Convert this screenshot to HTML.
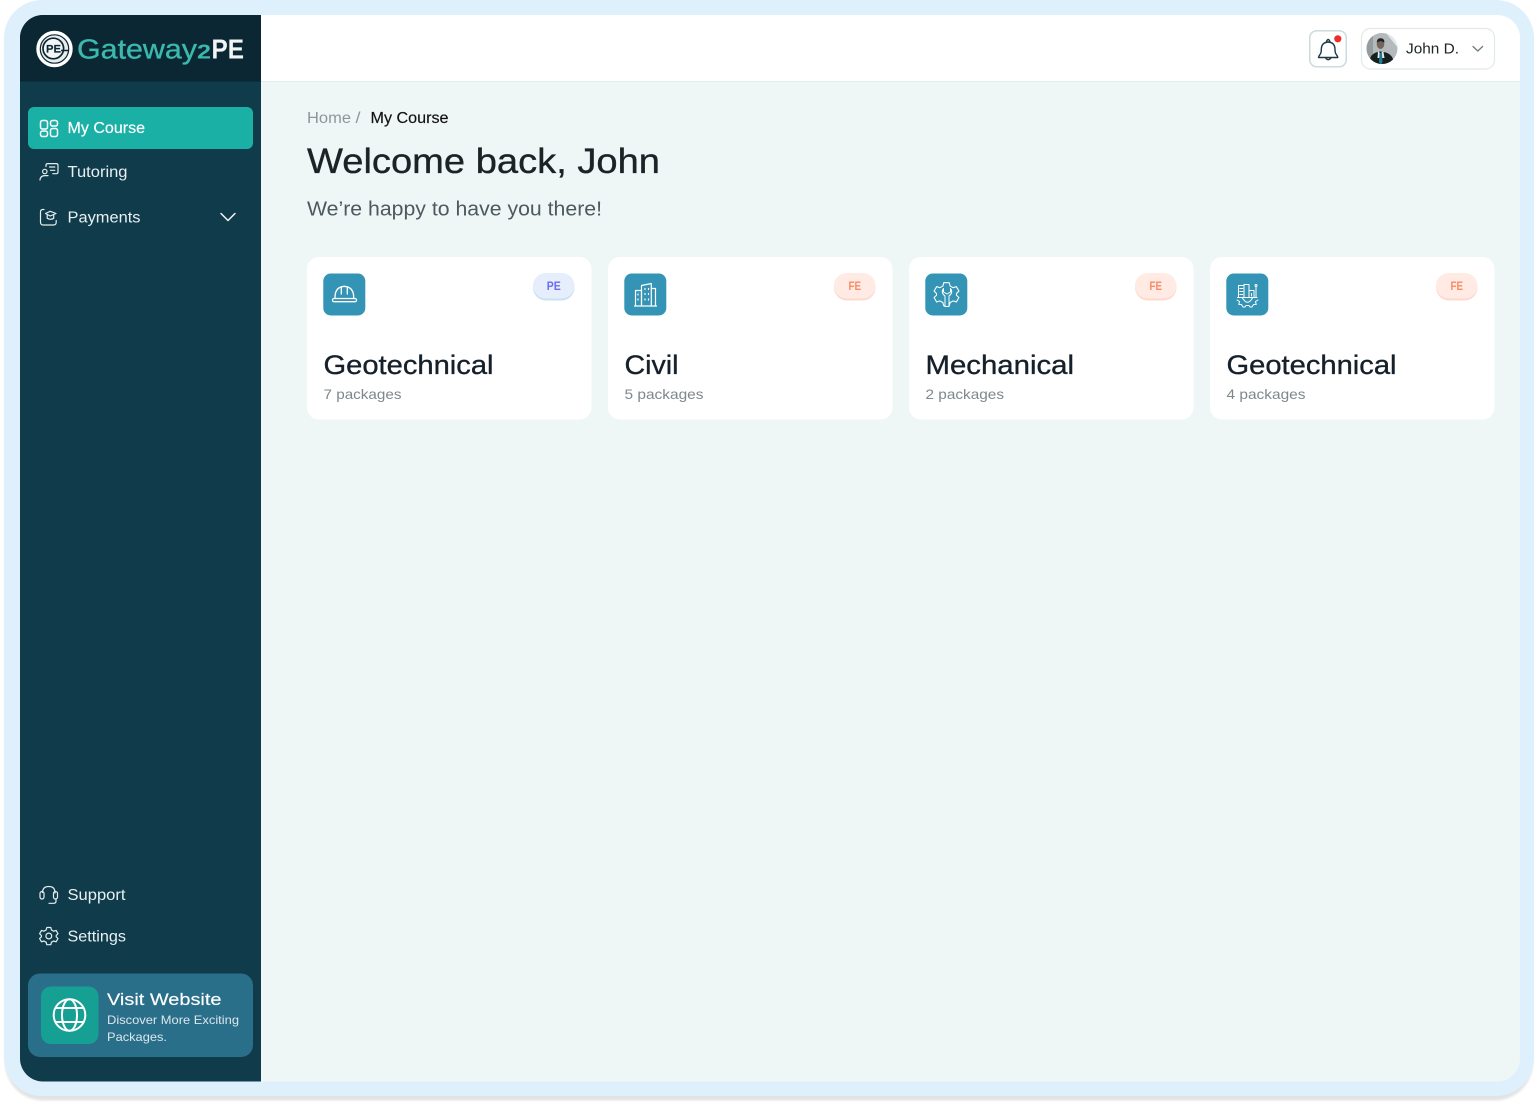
<!DOCTYPE html>
<html lang="en">
<head>
<meta charset="utf-8">
<title>Gateway2PE - My Course</title>
<style>
html,body{margin:0;padding:0;background:#fff;width:1539px;height:1107px;overflow:hidden}
svg{display:block}
text{font-family:"Liberation Sans",sans-serif;white-space:pre}
.m{stroke-width:.35px;paint-order:stroke}
.s{stroke-width:.15px;paint-order:stroke}
.ic{fill:none;stroke-linecap:round;stroke-linejoin:round}
</style>
</head>
<body>
<svg width="1539" height="1107" viewBox="0 0 1539 1107" xmlns="http://www.w3.org/2000/svg">
<defs>
<clipPath id="inner"><rect x="20" y="15" width="1500" height="1066.500" rx="23"/></clipPath>
<clipPath id="av"><circle cx="1382" cy="48.500" r="15.500"/></clipPath>
<filter id="bl" x="-5%" y="-5%" width="110%" height="110%"><feGaussianBlur stdDeviation="1"/></filter>
</defs>

<!-- outer frame -->
<rect x="5" y="4" width="1528" height="1096.500" rx="38" fill="#dcdddd" opacity=".8" filter="url(#bl)"/>
<rect x="4" y="0" width="1530" height="1096" rx="38" fill="#dff0fd"/>

<g clip-path="url(#inner)">
  <rect x="20" y="15" width="1500" height="1067" fill="#eff7f6"/>
  <rect x="261" y="15" width="1259" height="66" fill="#fff"/>
  <rect x="261" y="81" width="1259" height="1" fill="#e3ecec"/>
  <rect x="20" y="15" width="241" height="1067" fill="#103b4b"/>
  <rect x="20" y="15" width="241" height="66.500" fill="#0b2733"/>
</g>

<!-- logo -->
<circle cx="54.500" cy="49" r="16.500" fill="none" stroke="#fff" stroke-width="3.400"/>
<circle cx="54.500" cy="49" r="13.600" fill="#e9eced"/>
<circle cx="53.300" cy="48.500" r="10.300" fill="#f4f5f5" stroke="#0b2733" stroke-width="1.700"/>
<path d="M61 50.500H68.300" stroke="#0b2733" stroke-width="1.500" fill="none"/>
<text x="46" y="52.700" font-size="11" font-weight="700" fill="#0b2733" stroke="#0b2733" class="s" textLength="15" lengthAdjust="spacingAndGlyphs">PE</text>
<text x="77" y="58.500" font-size="28" fill="#3cb9ae" stroke="#3cb9ae" class="m" textLength="120" lengthAdjust="spacingAndGlyphs">Gateway</text>
<text x="197" y="58.500" font-size="20" font-weight="700" fill="#3cb9ae" textLength="14" lengthAdjust="spacingAndGlyphs">2</text>
<text x="211.500" y="58.500" font-size="28" font-weight="700" fill="#f2f4f5" textLength="32.500" lengthAdjust="spacingAndGlyphs">PE</text>

<!-- active nav -->
<rect x="28" y="107" width="225" height="42" rx="6" fill="#1ab0a6"/>
<g class="ic" stroke="#fff" stroke-width="1.500" >
  <rect x="40.500" y="120.500" width="7" height="8.500" rx="2"/>
  <rect x="50.500" y="120.500" width="7" height="5.500" rx="2"/>
  <rect x="40.500" y="131" width="7" height="5.500" rx="2"/>
  <rect x="50.500" y="128.500" width="7" height="8" rx="2"/>
</g>
<text x="67.500" y="133" font-size="15.500" fill="#fff" stroke="#fff" class="s" textLength="77.500" lengthAdjust="spacingAndGlyphs">My Course</text>

<!-- tutoring icon -->
<g class="ic" stroke="#e4eef0" stroke-width="1.200">
  <path d="M46 166.500V165.300Q46 163.600 47.800 163.600H56.200Q58 163.600 58 165.300V172Q58 173.700 56.200 173.700H52.800"/>
  <path d="M49.500 167H54.800M50.500 170.300H54.800"/>
  <circle cx="44.800" cy="171.500" r="2.200"/>
  <path d="M40 180Q40.300 175.600 45 175.600H48"/>
</g>
<text x="67.500" y="177" font-size="15.500" fill="#e8f0f2" textLength="60" lengthAdjust="spacingAndGlyphs">Tutoring</text>

<!-- payments icon -->
<g class="ic" stroke="#e4eef0" stroke-width="1.200">
  <path d="M44 209.500H42.800Q40.500 209.500 40.500 212V222.300Q40.500 225 43.200 225H53.600Q56.200 225 56.200 222.300V220.500"/>
  <path d="M45.500 213.500L50.200 211.300L56 213.500L50.200 216L45.500 213.500Z"/>
  <path d="M47.200 215.200V218.300Q50.400 220.300 53.700 218.300V215"/>
</g>
<text x="67.500" y="222.500" font-size="15.500" fill="#e8f0f2" textLength="73" lengthAdjust="spacingAndGlyphs">Payments</text>
<path d="M221 213.500L228 220.500L235 213.500" fill="none" stroke="#f0f5f6" stroke-width="1.500" stroke-linecap="round" stroke-linejoin="round"/>

<!-- support -->
<g class="ic" stroke="#e4eef0" stroke-width="1.200">
  <path d="M42.500 892V892.500Q42.500 886.500 48.800 886.500Q55 886.500 55 892.500V893"/>
  <rect x="40" y="891.500" width="4" height="7.500" rx="2"/>
  <rect x="53.500" y="891.500" width="4" height="7.500" rx="2"/>
  <path d="M56 899V901.200Q56 903.300 53.500 903.300H49"/>
</g>
<text x="67.500" y="900" font-size="15.500" fill="#e8f0f2" textLength="58" lengthAdjust="spacingAndGlyphs">Support</text>

<!-- settings -->
<g class="ic" stroke="#e4eef0" stroke-width="1.200">
  <circle cx="48.800" cy="936" r="2.900"/>
  <path d="M46.800 927.500H50.800L51.500 930L53.700 931.200L56.100 930.400L58 933.700L56.200 935.500V936.800L58 938.500L56.100 941.800L53.700 941L51.500 942.200L50.800 944.700H46.800L46.100 942.200L43.900 941L41.500 941.800L39.600 938.500L41.400 936.800V935.500L39.600 933.700L41.500 930.400L43.900 931.200L46.100 930Z"/>
</g>
<text x="67.500" y="941.500" font-size="15.500" fill="#e8f0f2" textLength="58.500" lengthAdjust="spacingAndGlyphs">Settings</text>

<!-- visit website -->
<rect x="28" y="973.500" width="225" height="83.500" rx="12" fill="#2a6f8a"/>
<rect x="41" y="986.500" width="57.500" height="57.500" rx="10" fill="#16a093"/>
<g class="ic" stroke="#fff" stroke-width="2">
  <circle cx="69.500" cy="1015" r="15.800"/>
  <ellipse cx="69.500" cy="1015" rx="7.500" ry="15.800"/>
  <path d="M55.500 1008H83.500M55.500 1022H83.500"/>
</g>
<text x="107" y="1005" font-size="17" fill="#fff" stroke="#fff" class="s" textLength="114.500" lengthAdjust="spacingAndGlyphs">Visit Website</text>
<text x="107" y="1024" font-size="12" fill="#dbe7ec" textLength="132" lengthAdjust="spacingAndGlyphs">Discover More Exciting</text>
<text x="107" y="1041" font-size="12" fill="#dbe7ec" textLength="60" lengthAdjust="spacingAndGlyphs">Packages.</text>

<!-- topbar -->
<rect x="1309.750" y="30.750" width="36.500" height="36" rx="7" fill="#fff" stroke="#cfdadd" stroke-width="1.500"/>
<g class="ic" stroke="#1b3a46" stroke-width="1.400">
  <path d="M1318.500 57.500H1337.800Q1337.800 56.500 1336.500 54.800Q1335 53 1335 49.500Q1335 42.500 1328.200 42Q1321.300 42.500 1321.300 49.500Q1321.300 53 1319.800 54.800Q1318.500 56.500 1318.500 57.500Z"/>
  <path d="M1326.500 41.500Q1328.200 37.500 1329.900 41.500"/>
  <path d="M1325.500 57.800Q1328.200 61.500 1331 57.800"/>
</g>
<circle cx="1337.800" cy="38.800" r="3.600" fill="#ee2a2a"/>

<rect x="1361.500" y="28.500" width="133" height="40.500" rx="9" fill="#fff" stroke="#e1e9ec" stroke-width="1.200"/>
<g clip-path="url(#av)">
  <rect x="1366" y="33" width="32" height="32" fill="#b4babb"/>
  <path d="M1386 33L1398 48V33Z" fill="#e3e9ea"/>
  <rect x="1366" y="33" width="7" height="32" fill="#959c9d"/>
  <ellipse cx="1380.500" cy="44" rx="3.800" ry="5" fill="#75645a"/>
  <path d="M1376.700 42.500Q1377 38 1380.500 38.200Q1384.500 38 1384.500 42.500L1380.500 41Z" fill="#1e2122"/>
  <path d="M1369 65Q1369 54 1377.500 52L1380.500 51.500L1384 52Q1394 54 1394 65Z" fill="#17201f"/>
  <path d="M1378 51L1380.500 53.500L1383.300 51L1384.500 58H1377.500Z" fill="#e7ecec"/>
  <path d="M1379.500 53H1382L1382.500 62L1380.700 65L1379 62Z" fill="#1e7f93"/>
</g>
<text x="1406" y="53.500" font-size="15" fill="#1e2427" textLength="53" lengthAdjust="spacingAndGlyphs">John D.</text>
<path d="M1473 46.500L1477.800 51L1482.600 46.500" fill="none" stroke="#6d7a80" stroke-width="1.300" stroke-linecap="round" stroke-linejoin="round"/>

<!-- heading -->
<text x="307" y="123" font-size="15.500" fill="#8d979b" textLength="44" lengthAdjust="spacingAndGlyphs">Home</text>
<text x="355.500" y="123" font-size="16" fill="#8d979b" textLength="5" lengthAdjust="spacingAndGlyphs">/</text>
<text x="370.500" y="123" font-size="15.500" fill="#111" stroke="#111" class="s" textLength="78" lengthAdjust="spacingAndGlyphs">My Course</text>
<text x="307" y="173" font-size="35" fill="#1b2327" stroke="#1b2327" class="m" textLength="353" lengthAdjust="spacingAndGlyphs">Welcome back, John</text>
<text x="307" y="215.500" font-size="20" fill="#4d595e" textLength="295" lengthAdjust="spacingAndGlyphs">We’re happy to have you there!</text>

<!-- cards -->
<rect x="307" y="257" width="284.500" height="162.500" rx="12" fill="#fff"/>
<rect x="608" y="257" width="284.500" height="162.500" rx="12" fill="#fff"/>
<rect x="909" y="257" width="284.500" height="162.500" rx="12" fill="#fff"/>
<rect x="1210" y="257" width="284.500" height="162.500" rx="12" fill="#fff"/>

<!-- card icons bg -->
<rect x="323.300" y="273.500" width="42" height="42" rx="7.500" fill="#3394b5"/>
<rect x="624.300" y="273.500" width="42" height="42" rx="7.500" fill="#3394b5"/>
<rect x="925.300" y="273.500" width="42" height="42" rx="7.500" fill="#3394b5"/>
<rect x="1226.300" y="273.500" width="42" height="42" rx="7.500" fill="#3394b5"/>

<!-- helmet -->
<g class="ic" stroke="#fff" stroke-width="1.300">
  <path d="M335 298.500Q334.500 287 344.300 286.300Q354.200 287 353.700 298.500"/>
  <path d="M341.300 294V286.800M347.300 294V286.800"/>
  <rect x="332.500" y="298.500" width="24" height="3.200" rx="1.500"/>
</g>
<!-- building -->
<g class="ic" stroke="#fff" stroke-width="1.200">
  <path d="M635.500 306V290.500H641.500V306"/>
  <path d="M641.500 306V285.500L651.300 283.500V306"/>
  <path d="M651.300 288.500H655.500V306"/>
  <path d="M634.500 306H656.500"/>
  <path d="M638 294V295M638 299V300M645 288.500V289.500M645 293.500V294.500M645 299V300M648.500 288.500V289.500M648.500 293.500V294.500M648.500 299V300"/>
</g>
<!-- gear wrench -->
<g class="ic" stroke="#fff" stroke-width="1">
  <g transform="translate(946.500 294.300) scale(1.350) translate(-48.800 -936.100)">
    <path stroke-width=".8" d="M46.800 927.500H50.800L51.500 930L53.700 931.200L56.100 930.400L58 933.700L56.200 935.500V936.800L58 938.500L56.100 941.800L53.700 941L51.500 942.200L50.800 944.700H46.800L46.100 942.200L43.900 941L41.500 941.800L39.600 938.500L41.400 936.800V935.500L39.600 933.700L41.500 930.400L43.900 931.200L46.100 930Z"/>
  </g>
  <path stroke="#3394b5" stroke-width="3.500" d="M947 303V307"/>
  <path fill="#3394b5" d="M943.500 288.500Q940.500 292.500 945 296V306.500H949V296Q953.500 292.500 950.500 288.500V292L947 294L943.500 292Z"/>
</g>
<!-- gear city -->
<g class="ic" stroke="#fff" stroke-width="1">
  <rect x="1238.500" y="285.500" width="5.500" height="12"/>
  <path d="M1239.800 288.500H1242.800M1239.800 291.500H1242.800M1239.800 294.500H1242.800"/>
  <path d="M1244 284.500V297.500H1249V284.500Z"/>
  <path d="M1249 297.500V290.500H1254V297.500"/>
  <path d="M1251.500 293.500V296"/>
  <path d="M1256 297.500V287"/><circle cx="1256" cy="285.500" r="1"/>
  <path d="M1237.500 297.500H1257"/>
  <path d="M1242.500 298Q1247.500 306.500 1252.500 298"/>
  <path d="M1237 300L1239.500 301.500L1238.800 304.500L1241.500 304.500L1243 307H1245L1246 305.500H1249L1250 307H1252L1253.500 304.500L1256.200 304.500L1255.500 301.500L1258 300"/>
</g>

<!-- badges -->
<rect x="533" y="274" width="41.500" height="26.500" rx="13" fill="#c9e1f1"/>
<rect x="533" y="273" width="41.500" height="25.500" rx="12.700" fill="#e6eefb"/>
<text x="546.800" y="290" font-size="12" font-weight="700" fill="#6a6cf5" textLength="14" lengthAdjust="spacingAndGlyphs">PE</text>
<g>
  <rect x="834" y="274" width="41.500" height="26.500" rx="13" fill="#fdd9cd"/>
  <rect x="834" y="273" width="41.500" height="25.500" rx="12.700" fill="#ffebe4"/>
  <text x="848.500" y="290" font-size="12" font-weight="700" fill="#f98a63" textLength="12.500" lengthAdjust="spacingAndGlyphs">FE</text>
  <rect x="1135" y="274" width="41.500" height="26.500" rx="13" fill="#fdd9cd"/>
  <rect x="1135" y="273" width="41.500" height="25.500" rx="12.700" fill="#ffebe4"/>
  <text x="1149.500" y="290" font-size="12" font-weight="700" fill="#f98a63" textLength="12.500" lengthAdjust="spacingAndGlyphs">FE</text>
  <rect x="1436" y="274" width="41.500" height="26.500" rx="13" fill="#fdd9cd"/>
  <rect x="1436" y="273" width="41.500" height="25.500" rx="12.700" fill="#ffebe4"/>
  <text x="1450.500" y="290" font-size="12" font-weight="700" fill="#f98a63" textLength="12.500" lengthAdjust="spacingAndGlyphs">FE</text>
</g>

<!-- card text -->
<text x="323.500" y="374" font-size="27" fill="#15202b" stroke="#15202b" class="m" textLength="170" lengthAdjust="spacingAndGlyphs">Geotechnical</text>
<text x="323.500" y="399" font-size="14" fill="#7d888d" textLength="78" lengthAdjust="spacingAndGlyphs">7 packages</text>
<text x="624.500" y="374" font-size="27" fill="#15202b" stroke="#15202b" class="m" textLength="54" lengthAdjust="spacingAndGlyphs">Civil</text>
<text x="624.500" y="399" font-size="14" fill="#7d888d" textLength="79" lengthAdjust="spacingAndGlyphs">5 packages</text>
<text x="925.500" y="374" font-size="27" fill="#15202b" stroke="#15202b" class="m" textLength="148.500" lengthAdjust="spacingAndGlyphs">Mechanical</text>
<text x="925.500" y="399" font-size="14" fill="#7d888d" textLength="78.500" lengthAdjust="spacingAndGlyphs">2 packages</text>
<text x="1226.500" y="374" font-size="27" fill="#15202b" stroke="#15202b" class="m" textLength="170" lengthAdjust="spacingAndGlyphs">Geotechnical</text>
<text x="1226.500" y="399" font-size="14" fill="#7d888d" textLength="79" lengthAdjust="spacingAndGlyphs">4 packages</text>
</svg>
</body>
</html>
